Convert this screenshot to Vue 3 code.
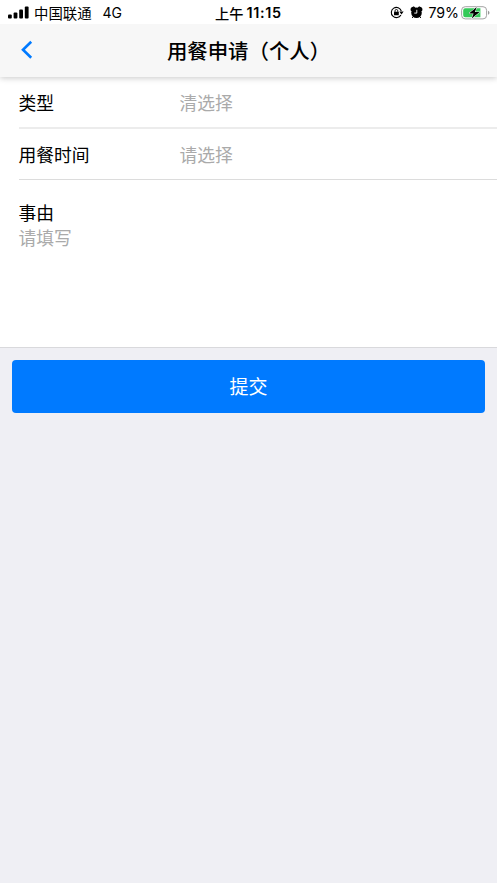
<script setup>
const fields = [
  { label: '类型', placeholder: '清选择' },
  { label: '用餐时间', placeholder: '请选择' }
]
</script>

<template>
  <div class="page">
    <div class="status">
      <svg class="signal" width="21" height="13" viewBox="0 0 21 13">
        <rect x="0" y="8.5" width="3.8" height="4" rx="1" />
        <rect x="5.6" y="6.6" width="3.8" height="5.9" rx="1" />
        <rect x="11.2" y="3.6" width="3.8" height="8.9" rx="1" />
        <rect x="16.8" y="0.5" width="3.8" height="12" rx="1" />
      </svg>
      <span class="carrier">中国联通</span>
      <span class="network">4G</span>
      <span class="time"><span class="ampm">上午</span><b>11:15</b></span>
      <div class="right">
        <svg class="lock" width="14" height="13" viewBox="0 0 14 13">
          <path d="M10.9 8.9A5.1 5.1 0 1 1 11.3 5" fill="none" stroke="#000" stroke-width="1.1" />
          <path d="M9.3 5.6h4.3l-2.1 3z" />
          <rect x="4" y="5.8" width="4.8" height="3.5" rx=".5" />
          <path d="M5 6V4.9a1.4 1.4 0 0 1 2.8 0V6" fill="none" stroke="#000" stroke-width=".9" />
        </svg>
        <svg class="alarm" width="13" height="13" viewBox="0 0 13 13">
          <circle cx="6.5" cy="6.7" r="5.3" />
          <path d="M1 4.4Q.4 1.3 3.6.9L5 1.6 2 4.6zM12 4.4Q12.6 1.3 9.4.9L8 1.6l3 3zM2.2 12l1.5-2M10.8 12l-1.5-2" stroke="#000" stroke-width="1" />
          <path d="M6.8 3.8v3.3H4.3" fill="none" stroke="#fff" stroke-width=".9" />
        </svg>
        <span class="percent">79%</span>
        <svg class="battery" width="29" height="14" viewBox="0 0 29 14">
          <rect x=".6" y=".7" width="25" height="12.2" rx="3.6" fill="#fff" stroke="#a3a3a3" stroke-width="1" />
          <path d="M4.2 2.3h15.2v9H4.2a2 2 0 0 1-2-2v-5a2 2 0 0 1 2-2z" fill="#35ca59" />
          <path d="M27 4.8v4q1.5-.6 1.5-2t-1.5-2z" fill="#999" />
          <path d="M15.7 1 8 7.4h4.6l-1.9 5.2 7.9-6.5h-4.7z" fill="#000" stroke="#fff" stroke-width="1" paint-order="stroke" />
        </svg>
      </div>
    </div>
    <header class="nav">
      <svg class="back" width="13" height="20" viewBox="0 0 13 20">
        <path d="M11.2 1.8 3 9.8l8.2 8" fill="none" stroke="#007aff" stroke-width="2.6" />
      </svg>
      <h1>用餐申请（个人）</h1>
    </header>
    <main class="form">
      <div v-for="f in fields" :key="f.label" class="row">
        <span class="label">{{ f.label }}</span>
        <span class="placeholder">{{ f.placeholder }}</span>
      </div>
      <div class="reason">
        <div>事由</div>
        <div class="placeholder">请填写</div>
      </div>
    </main>
    <div class="actions"><button class="submit">提交</button></div>
  </div>
</template>

<style>
body { background: #efeff4; }
</style>
<style scoped>
.page {
  min-height: 883px;
  background: #efeff4;
  color: #000;
  font-family: "Noto Sans CJK SC", sans-serif;
}
.status {
  display: flex;
  align-items: center;
  position: relative;
  z-index: 1;
  height: 24px;
  padding: 1px 7px 0 8px;
  box-sizing: border-box;
  background: #fff;
  font-size: 14.4px;
  line-height: 22px;
}
.carrier { margin-left: 5px; }
.network { margin-left: 11px; font-family: Inter, sans-serif; font-size: 14px; }
.time { display: flex; margin-left: 93px; }
.time b { margin-left: 3px; font-family: Inter, sans-serif; font-size: 14.4px; font-weight: 600; letter-spacing: .7px; }
.ampm { font-weight: 500; font-size: 14.2px; }
.right { display: flex; align-items: center; margin-left: auto; }
.alarm { margin-left: 6px; }
.percent { margin-left: 5px; font-family: Inter, sans-serif; font-size: 14.2px; }
.battery { margin-left: 2px; }
.nav {
  display: flex;
  align-items: center;
  justify-content: center;
  position: relative;
  height: 53px;
  padding-bottom: 2px;
  box-sizing: border-box;
  background: #f7f7f7;
  box-shadow: 0 1px 6px rgba(0, 0, 0, .22);
}
.back { position: absolute; left: 20px; top: 16px; }
h1 { margin: 0; font-size: 20.4px; font-weight: 500; line-height: 30px; }
.form {
  height: 270px;
  background: #fff;
  border-bottom: 1px solid #d9d9dc;
  font-size: 17.8px;
  line-height: 25px;
}
.row {
  display: flex;
  align-items: center;
  height: 51px;
  margin-left: 18.5px;
  border-bottom: 1px solid #dcdcdc;
}
.row:first-child { height: 50px; border-bottom: 2px solid #ececec; }
.row + .row { height: 50px; }
.label { width: 161px; }
.placeholder { color: #aaa; }
.reason { padding: 20px 18.5px; }
.actions { padding: 12px; }
.submit {
  display: block;
  width: 100%;
  height: 53px;
  padding: 0 0 2px;
  border: 0;
  border-radius: 4px;
  background: #007aff;
  color: #fff;
  font-family: inherit;
  font-size: 19px;
}
</style>
